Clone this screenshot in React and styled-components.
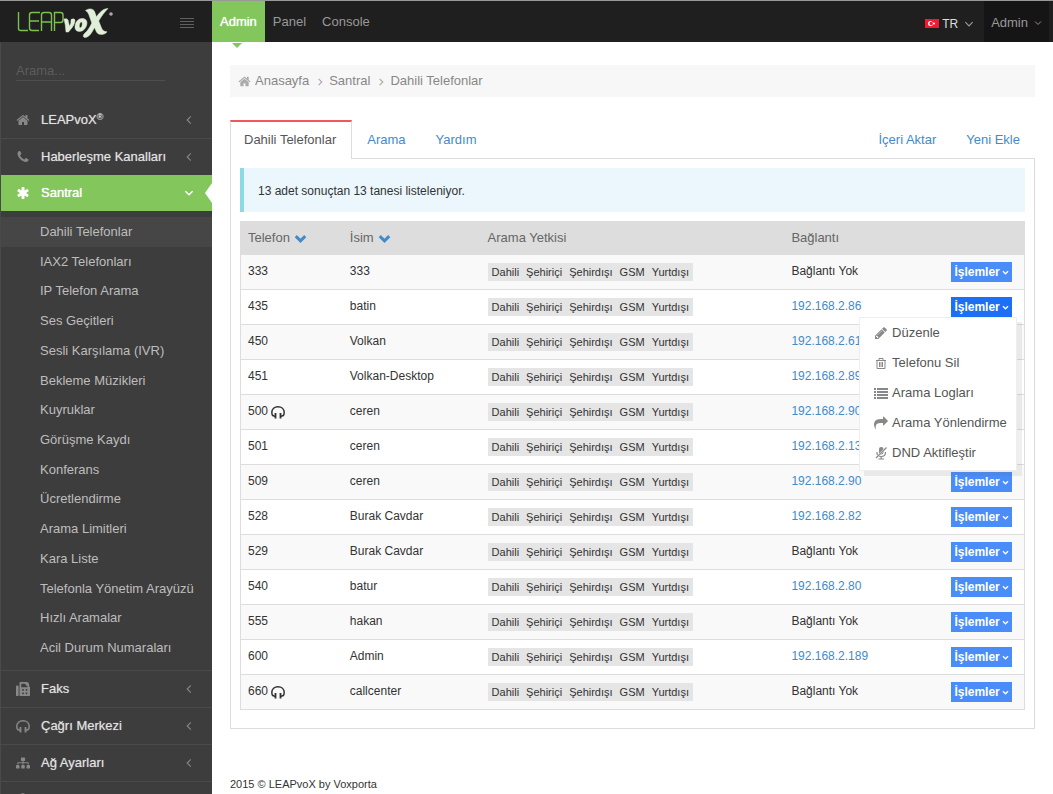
import React from 'react'
import styled, { createGlobalStyle } from 'styled-components'
import { FaFax, FaSitemap, FaCog } from 'react-icons/fa'

const GlobalStyle = createGlobalStyle`
    * {
        box-sizing: border-box;
    }
    body {
        margin: 0;
        background: #fff;
        color: #333;
        font-family: "Liberation Sans", Arial, sans-serif;
        font-size: 12px;
        line-height: 18px;
    }
    ul, ol {
        list-style: none;
        margin: 0;
        padding: 0;
    }
    a {
        color: #428bca;
        text-decoration: none;
    }
    button, input {
        font-family: inherit;
    }
`

const Page = styled.div`
    display: flex;
    flex-direction: column;
    height: 100vh;
    overflow: hidden;
`

const TopBar = styled.header`
    display: flex;
    flex: none;
    height: 42px;
    background: #1f1f1f;
    border-top: 1px solid #999;
`

const Brand = styled.div`
    display: flex;
    align-items: center;
    justify-content: space-between;
    width: 212px;
    padding: 0 18px 0 16px;
`

const MenuToggle = styled.button`
    display: flex;
    padding: 0;
    margin-top: 4px;
    border: 0;
    background: none;
    color: #606060;
    cursor: pointer;
`

const TopNav = styled.nav`
    display: flex;
    flex: 1;
`

const TopLink = styled.a`
    position: relative;
    padding: 0 8px;
    font-size: 13px;
    line-height: 41px;
    text-shadow: ${props => (props.$active ? '0 0 1px #fff' : 'none')};
    color: ${props => (props.$active ? '#fff' : '#999')};
    background: ${props => (props.$active ? '#82c65c' : 'none')};
    &::after {
        content: '';
        display: ${props => (props.$active ? 'block' : 'none')};
        position: absolute;
        top: 42px;
        left: 20px;
        border: 5px solid transparent;
        border-top-color: #82c65c;
        border-bottom: 0;
    }
`

const UserMenu = styled.button`
    display: flex;
    align-items: center;
    gap: ${props => (props.$dark ? '6px' : '3px')};
    padding: ${props => (props.$dark ? '2px 7px 0' : '4px 10px 0')};
    margin-right: ${props => (props.$dark ? '4px' : '0')};
    border: 0;
    font-size: ${props => (props.$dark ? '13px' : '12px')};
    color: ${props => (props.$dark ? '#999' : '#ddd')};
    background: ${props => (props.$dark ? '#151515' : 'none')};
    cursor: pointer;
    svg:last-child {
        margin-left: ${props => (props.$dark ? '0' : '3px')};
        color: #999;
    }
`

const Body = styled.div`
    display: flex;
    flex: 1;
    min-height: 0;
`

const Sidebar = styled.aside`
    flex: none;
    width: 212px;
    background: #3d3d3d;
    border-left: 1px solid #4a4a4a;
`

const SearchBox = styled.div`
    padding: 18px 47px 20px 15px;
`

const SearchInput = styled.input`
    display: block;
    width: 100%;
    height: 21px;
    padding: 0;
    border: 0;
    border-bottom: 1px solid #4e4e4e;
    background: none;
    font-size: 13px;
    color: #999;
    outline: none;
    &::placeholder {
        color: #5c5c5c;
        opacity: 1;
    }
`

const SideItem = styled.li`
    border-top: 1px solid ${props => (props.$active ? '#82c65c' : props.$first ? 'transparent' : '#4a4a4a')};
`

const SideLink = styled.a`
    display: flex;
    align-items: center;
    height: ${props => (props.$active ? '35px' : '36px')};
    padding: ${props => (props.$active ? '0 18px 1px 15px' : '0 18px 0 15px')};
    font-size: 13px;
    position: relative;
    color: ${props => (props.$active ? '#fff' : '#e2e2e2')};
    background: ${props => (props.$active ? '#82c65c' : 'none')};
    text-shadow: 0 0 1px ${props => (props.$active ? '#fff' : '#999')};
    svg {
        color: ${props => (props.$active ? '#fff' : '#888')};
    }
    &::after {
        content: '';
        display: ${props => (props.$active ? 'block' : 'none')};
        position: absolute;
        right: 0;
        top: 7px;
        border: 10px solid transparent;
        border-right: 7px solid #fff;
        border-left: 0;
    }
`

const SideIcon = styled.span`
    display: flex;
    width: 25px;
`

const SideLabel = styled.span`
    flex: 1;
    sup {
        font-size: 9px;
        line-height: 0;
        vertical-align: 4px;
    }
`

const SubMenu = styled.ul`
    display: flex;
    flex-direction: column;
    min-height: 459px;
    padding: 6px 0 7px;
`

const SubItem = styled.li`
    display: flex;
    flex: 1;
    align-items: center;
    background: ${props => (props.$active ? '#464646' : 'none')};
    a {
        padding-left: 39px;
        font-size: 13px;
        line-height: 18px;
        color: #bdbdbd;
    }
`

const Content = styled.main`
    flex: 1;
    min-width: 0;
    padding: 23px 18px 0;
`

const Breadcrumb = styled.ol`
    display: flex;
    align-items: center;
    height: 32px;
    padding: 0 8px;
    background: #f7f7f7;
    li {
        display: flex;
        align-items: center;
        gap: 4px;
    }
    a {
        font-size: 13px;
        color: #888;
    }
    svg {
        color: #aaa;
    }
    li > svg:last-child {
        margin: 1px 4px 0 2px;
    }
`

const Tabs = styled.nav`
    display: flex;
    margin-top: 23px;
    border-bottom: 1px solid #ddd;
`

const Tab = styled.a`
    height: ${props => (props.$active ? '39px' : '38px')};
    margin-bottom: ${props => (props.$active ? '-1px' : '0')};
    margin-left: ${props => (props.$push ? 'auto' : '0')};
    padding: ${props => (props.$active ? '9px 15px 9px 13px' : '11px 15px')};
    border: ${props => (props.$active ? '1px solid #ddd' : '0')};
    border-top: ${props => (props.$active ? '2px solid #f3565d' : '0')};
    border-bottom: 0;
    background: #fff;
    font-size: 13px;
    color: ${props => (props.$active ? '#555' : '#428bca')};
`

const Panel = styled.section`
    padding: 9px 9px 18px;
    border: 1px solid #ddd;
    border-top: 0;
`

const Note = styled.div`
    padding: 14px 14px 12px;
    border-left: 4px solid #8dd9e6;
    background: #ecf6fd;
`

const Table = styled.table`
    width: 100%;
    margin-top: 9px;
    table-layout: fixed;
    border-collapse: separate;
    border-spacing: 0;
    border: 1px solid #ddd;
    border-top: 0;
`

const Head = styled.th`
    width: ${props => props.$width};
    height: 34px;
    padding: 0 7px;
    background: #ddd;
    text-align: left;
    font-size: 13px;
    font-weight: normal;
    color: #666;
    button {
        padding: 0;
        border: 0;
        background: none;
        font-size: 13px;
        color: #666;
        cursor: pointer;
    }
    svg {
        margin-left: 4px;
        vertical-align: -3px;
        color: #428bca;
    }
`

const Row = styled.tr`
    background: #fff;
    &:nth-child(odd) {
        background: #f9f9f9;
    }
    &:last-child td {
        border-bottom: 0;
        height: 34px;
    }
`

const Cell = styled.td`
    height: 35px;
    padding: 0 7px 2px;
    border-bottom: 1px solid #ddd;
    white-space: nowrap;
    svg {
        vertical-align: -4px;
    }
`

const Permissions = styled.span`
    display: inline-flex;
    gap: 7px;
    padding: 0 4px;
    margin-top: 2px;
    background: #e5e5e5;
    font-size: 11px;
    vertical-align: middle;
`

const Actions = styled.div`
    position: relative;
    display: inline-block;
    margin-top: 2px;
    vertical-align: middle;
`

const ActionButton = styled.button`
    display: flex;
    align-items: center;
    justify-content: center;
    width: 61px;
    height: 20px;
    gap: 2px;
    padding: 0;
    border: 0;
    font-size: 12px;
    font-weight: bold;
    color: #fff;
    background: ${props => (props.$open ? '#1d70f5' : '#4b8df8')};
    cursor: pointer;
`

const Dropdown = styled.ul`
    position: absolute;
    z-index: 10;
    top: 20px;
    right: -5px;
    width: 158px;
    padding-bottom: 2px;
    border: 1px solid #eee;
    background: #fff;
    box-shadow: 5px 5px rgba(102, 102, 102, 0.1);
    a {
        display: flex;
        align-items: center;
        gap: 4px;
        padding: 6px 0 6px 14px;
        font-size: 13px;
        color: #555;
    }
    svg {
        flex: none;
        color: #888;
    }
`

const Footer = styled.footer`
    padding-top: 46px;
    font-size: 11px;
`

const solidPaths = {
    home: 'M1472 992v480q0 26-19 45t-45 19h-384v-384h-256v384h-384q-26 0-45-19t-19-45v-480q0-1 .5-3t.5-3l575-474 575 474q1 2 1 6zm223-69l-62 74q-8 9-21 11h-3q-13 0-21-7l-692-577-692 577q-12 8-24 7-13-2-21-11l-62-74q-8-10-7-23.5t11-21.5l719-599q32-26 76-26t76 26l244 204v-195q0-14 9-23t23-9h192q14 0 23 9t9 23v408l219 182q10 8 11 21.5t-7 23.5z',
    phone: 'M1600 1240q0 27-10 70.5t-21 68.5q-21 50-122 106-94 51-186 51-27 0-53-3.5t-57.5-12.5-47-14.5-55.5-20.5-49-18q-98-35-175-83-127-79-264-216t-216-264q-48-77-83-175-3-9-18-49t-20.5-55.5-14.5-47-12.5-57.5-3.5-53q0-92 51-186 56-101 106-122 25-11 68.5-21t70.5-10q14 0 21 3 18 6 53 76 11 19 30 54t35 63.5 31 53.5q3 4 17.5 25t21.5 35.5 7 28.5q0 20-28.5 50t-62 55-62 53-28.5 46q0 9 5 22.5t8.5 20.5 14 24 11.5 19q76 137 174 235t235 174q2 1 19 11.5t24 14 20.5 8.5 22.5 5q18 0 46-28.5t53-62 55-62 50-28.5q14 0 28.5 7t35.5 21.5 25 17.5q25 15 53.5 31t63.5 35 54 30q70 35 76 53 3 7 3 21z',
    asterisk: 'M1546 1050q46 26 59.5 77.5t-12.5 97.5l-64 110q-26 46-77.5 59.5t-97.5-12.5l-266-153v307q0 52-38 90t-90 38h-128q-52 0-90-38t-38-90v-307l-266 153q-46 26-97.5 12.5t-77.5-59.5l-64-110q-26-46-12.5-97.5t59.5-77.5l266-154-266-154q-46-26-59.5-77.5t12.5-97.5l64-110q26-46 77.5-59.5t97.5 12.5l266 153v-307q0-52 38-90t90-38h128q52 0 90 38t38 90v307l266-153q46-26 97.5-12.5t77.5 59.5l64 110q26 46 12.5 97.5t-59.5 77.5l-266 154z',
    pencil: 'M491 1536l91-91-235-235-91 91v107h128v128h107zm523-928q0-22-22-22-10 0-17 7l-542 542q-7 7-7 17 0 22 22 22 10 0 17-7l542-542q7-7 7-17zm-54-192l416 416-832 832h-416v-416zm683 96q0 53-37 90l-166 166-416-416 166-165q36-38 90-38 53 0 91 38l235 234q37 39 37 91z',
    share: 'M1792 640q0 26-19 45l-512 512q-19 19-45 19t-45-19-19-45v-256h-224q-98 0-175.5 6t-154 21.5-133 42.5-105.5 69.5-80 101-48.5 138.5-17.5 181q0 55 5 123 0 6 2.5 23.5t2.5 26.5q0 15-8.5 25t-23.5 10q-16 0-28-17-7-9-13-22t-13.5-30-10.5-24q-127-285-127-451 0-199 53-333 162-403 875-403h224v-256q0-26 19-45t45-19 45 19l512 512q19 19 19 45z',
}

const Solid = ({ name, size = 14 }) => (
    <svg width={size} height={size} viewBox="0 0 1792 1792" fill="currentColor" aria-hidden="true">
        <path d={solidPaths[name]} />
    </svg>
)

const chevrons = {
    left: 'M7 1.5L3 5.5L7 9.5',
    right: 'M3.5 2L7 5.5L3.5 9',
    down: 'M1 3.5L5 7.5L9 3.5',
}

const Chevron = ({ to, size = 10, weight = 1.3 }) => (
    <svg width={size} height={size} viewBox="0 0 10 11" fill="none" stroke="currentColor" strokeWidth={weight} aria-hidden="true">
        <path d={chevrons[to]} />
    </svg>
)

const Headphones = () => (
    <svg width="14" height="14" viewBox="0 0 14 14" fill="none" stroke="currentColor" aria-hidden="true">
        <path d="M2 11Q.8 9.500 .8 7.500C.8 3.800 3.500 1.700 7 1.700S13.200 3.800 13.200 7.500Q13.200 9.500 12 11" strokeWidth="1.500" />
        <path d="M4.500 8v5.500M9.500 8v5.500" strokeWidth="1.800" />
        <path d="M1.800 10.300l2.200 1.200M12.200 10.300l-2.200 1.200" strokeWidth="1.500" />
    </svg>
)

const Trash = () => (
    <svg width="14" height="14" viewBox="0 0 14 14" fill="none" stroke="currentColor" aria-hidden="true">
        <path d="M2 4.500h10M5 4.500V2.500h4v2M3 4.500v8h8v-8M5.500 6v5M7 6v5M8.500 6v5" />
    </svg>
)

const ListIcon = () => (
    <svg width="14" height="14" viewBox="0 0 14 14" fill="currentColor" aria-hidden="true">
        <path d="M0 2h2v2H0zM3 2h11v2H3zM0 5h2v2H0zM3 5h11v2H3zM0 8h2v2H0zM3 8h11v2H3zM0 11h2v2H0zM3 11h11v2H3z" />
    </svg>
)

const MutedMic = () => (
    <svg width="14" height="14" viewBox="0 0 14 14" fill="none" stroke="currentColor" aria-hidden="true">
        <rect x="5" y="1" width="4.500" height="7.500" rx="2.200" fill="currentColor" stroke="none" />
        <path d="M3 6v1q0 3.500 4.200 3.500T11.400 7V6M7.200 10.500v2.500M4.500 13h5.500" strokeWidth="1.200" />
        <path d="M12.500 1.500L2 12" stroke="#fff" strokeWidth="2" />
        <path d="M12.500 1.500L2 12" strokeWidth="1.200" />
    </svg>
)

const Flag = () => (
    <svg width="14" height="9" viewBox="0 0 14 9" aria-hidden="true">
        <rect width="14" height="9" fill="#f31930" />
        <circle cx="5.500" cy="4.500" r="2.500" fill="#fff" />
        <circle cx="6.200" cy="4.500" r="1.700" fill="#f31930" />
        <circle cx="9" cy="4.500" r="1.100" fill="#fff" />
    </svg>
)

const Logo = () => (
    <svg width="98" height="37" viewBox="0 0 98 37" role="img" aria-label="LEAPvoX">
        <g fill="none" stroke="#7cc04f" strokeWidth="1.400">
            <path d="M2.500 9v16.500q0 2 2 2h7.500" />
            <path d="M24 9.500h-8q-2.500 0-2.500 2.500v13q0 2.500 2.500 2.500h7M13.500 18h9.500" />
            <path d="M25.500 28V12q0-2.500 2.500-2.500h5q2.500 0 2.500 2.500v16M25.500 19h10" />
            <path d="M38.500 28V9.500h6q2.500 0 2.500 2.500v5q0 2.500-2.500 2.500h-6" />
        </g>
        <g fill="#e0f0d8" stroke="#e0f0d8" strokeWidth=".5">
            <path d="M48 16q3-1 4 1l1.500 6.500q2-3 1.500-7 3-1.500 4 .5c0 5-4 9-6.500 12h-2.500q-.5-8-2-13z" />
            <path fillRule="evenodd" d="M66 15.500c4 0 5.500 2.500 4.800 6s-3.600 7-7.300 7c-4 0-5-3-4.300-6.500s3.200-6.500 6.800-6.500zm-.8 3.500c-1.500 0-2.700 5.500-1 5.800 1.900.3 3-5.800 1-5.800z" />
            <path d="M69.500 7.500c3.500-2.500 8-2 9 1l2 5.500c2.800-4.500 6.500-8.300 11.500-8.500-1.500 1.500-6 6.500-9.300 12.500l2.800 7c1 2.500 3 3.800 5.500 3.800-1.500 3-8.500 4-10.500.2l-2-4.500c-2.500 5-5 9.500-9.500 10-2.500-.3-2-2.800 0-4.500 2.500-2 5-6 6.800-10l-3-8.500q-.7-2.500-3.300-4z" />
        </g>
        <circle cx="95" cy="11" r="1.800" fill="#aaa" />
    </svg>
)

const subPages = [
    'Dahili Telefonlar',
    'IAX2 Telefonları',
    'IP Telefon Arama',
    'Ses Geçitleri',
    'Sesli Karşılama (IVR)',
    'Bekleme Müzikleri',
    'Kuyruklar',
    'Görüşme Kaydı',
    'Konferans',
    'Ücretlendirme',
    'Arama Limitleri',
    'Kara Liste',
    'Telefonla Yönetim Arayüzü',
    'Hızlı Aramalar',
    'Acil Durum Numaraları',
]

const sections = [
    { icon: <Solid name="home" />, label: <>LEAPvoX<sup>®</sup></> },
    { icon: <Solid name="phone" />, label: 'Haberleşme Kanalları' },
    { icon: <Solid name="asterisk" />, label: 'Santral', pages: subPages },
    { icon: <FaFax size={14} />, label: 'Faks' },
    { icon: <Headphones />, label: 'Çağrı Merkezi' },
    { icon: <FaSitemap size={14} />, label: 'Ağ Ayarları' },
    { icon: <FaCog size={14} />, label: '' },
]

const permissions = ['Dahili', 'Şehiriçi', 'Şehirdışı', 'GSM', 'Yurtdışı']

const phones = [
    { no: '333', name: '333' },
    { no: '435', name: 'batin', ip: '192.168.2.86', open: true },
    { no: '450', name: 'Volkan', ip: '192.168.2.61' },
    { no: '451', name: 'Volkan-Desktop', ip: '192.168.2.89' },
    { no: '500', name: 'ceren', ip: '192.168.2.90', agent: true },
    { no: '501', name: 'ceren', ip: '192.168.2.13' },
    { no: '509', name: 'ceren', ip: '192.168.2.90' },
    { no: '528', name: 'Burak Cavdar', ip: '192.168.2.82' },
    { no: '529', name: 'Burak Cavdar' },
    { no: '540', name: 'batur', ip: '192.168.2.80' },
    { no: '555', name: 'hakan' },
    { no: '600', name: 'Admin', ip: '192.168.2.189' },
    { no: '660', name: 'callcenter', agent: true },
]

const actions = [
    { icon: <Solid name="pencil" />, label: 'Düzenle' },
    { icon: <Trash />, label: 'Telefonu Sil' },
    { icon: <ListIcon />, label: 'Arama Logları' },
    { icon: <Solid name="share" />, label: 'Arama Yönlendirme' },
    { icon: <MutedMic />, label: 'DND Aktifleştir' },
]

const SideSection = ({ icon, label, pages, first }) => (
    <SideItem $active={!!pages} $first={first}>
        <SideLink href="#" $active={!!pages}>
            <SideIcon>{icon}</SideIcon>
            <SideLabel>{label}</SideLabel>
            <Chevron to={pages ? 'down' : 'left'} weight={pages ? 1.6 : 1.2} />
        </SideLink>
        {pages && (
            <SubMenu>
                {pages.map((page, i) => (
                    <SubItem key={page} $active={i === 0}><a href="#">{page}</a></SubItem>
                ))}
            </SubMenu>
        )}
    </SideItem>
)

const PhoneRow = ({ phone }) => (
    <Row>
        <Cell>{phone.no} {phone.agent && <Headphones />}</Cell>
        <Cell>{phone.name}</Cell>
        <Cell>
            <Permissions>
                {permissions.map(p => <span key={p}>{p}</span>)}
            </Permissions>
        </Cell>
        <Cell>{phone.ip ? <a href="#">{phone.ip}</a> : 'Bağlantı Yok'}</Cell>
        <Cell>
            <Actions>
                <ActionButton $open={phone.open}>
                    İşlemler <Chevron to="down" size={7} weight={2} />
                </ActionButton>
                {phone.open && (
                    <Dropdown>
                        {actions.map(a => (
                            <li key={a.label}><a href="#">{a.icon}{a.label}</a></li>
                        ))}
                    </Dropdown>
                )}
            </Actions>
        </Cell>
    </Row>
)

const App = () => {
    return (
        <Page>
            <GlobalStyle />
            <TopBar>
                <Brand>
                    <Logo />
                    <MenuToggle aria-label="Menü">
                        <svg width="14" height="11" viewBox="0 0 14 11" fill="currentColor">
                            <path d="M0 0h14v1H0zM0 3h14v1H0zM0 6h14v1H0zM0 9h14v1H0z" />
                        </svg>
                    </MenuToggle>
                </Brand>
                <TopNav>
                    <TopLink href="#" $active>Admin</TopLink>
                    <TopLink href="#">Panel</TopLink>
                    <TopLink href="#">Console</TopLink>
                </TopNav>
                <UserMenu><Flag /> TR <Chevron to="down" /></UserMenu>
                <UserMenu $dark>Admin <Chevron to="down" size={8} /></UserMenu>
            </TopBar>
            <Body>
                <Sidebar>
                    <SearchBox>
                        <SearchInput placeholder="Arama..." aria-label="Arama" />
                    </SearchBox>
                    <ul>
                        {sections.map((s, i) => <SideSection key={i} first={i === 0} {...s} />)}
                    </ul>
                </Sidebar>
                <Content>
                    <Breadcrumb>
                        <li><Solid name="home" size={13} /><a href="#">Anasayfa</a><Chevron to="right" /></li>
                        <li><a href="#">Santral</a><Chevron to="right" /></li>
                        <li><a href="#">Dahili Telefonlar</a></li>
                    </Breadcrumb>
                    <Tabs>
                        <Tab href="#" $active>Dahili Telefonlar</Tab>
                        <Tab href="#">Arama</Tab>
                        <Tab href="#">Yardım</Tab>
                        <Tab href="#" $push>İçeri Aktar</Tab>
                        <Tab href="#">Yeni Ekle</Tab>
                    </Tabs>
                    <Panel>
                        <Note>13 adet sonuçtan 13 tanesi listeleniyor.</Note>
                        <Table>
                            <thead>
                                <tr>
                                    <Head $width="13%"><button>Telefon<Chevron to="down" size={13} weight={2.5} /></button></Head>
                                    <Head $width="17.6%"><button>İsim<Chevron to="down" size={13} weight={2.5} /></button></Head>
                                    <Head $width="38.8%">Arama Yetkisi</Head>
                                    <Head $width="20.4%">Bağlantı</Head>
                                    <Head aria-label="İşlemler" />
                                </tr>
                            </thead>
                            <tbody>
                                {phones.map(p => <PhoneRow key={p.no} phone={p} />)}
                            </tbody>
                        </Table>
                    </Panel>
                    <Footer>2015 © LEAPvoX by Voxporta</Footer>
                </Content>
            </Body>
        </Page>
    )
}

export default App
